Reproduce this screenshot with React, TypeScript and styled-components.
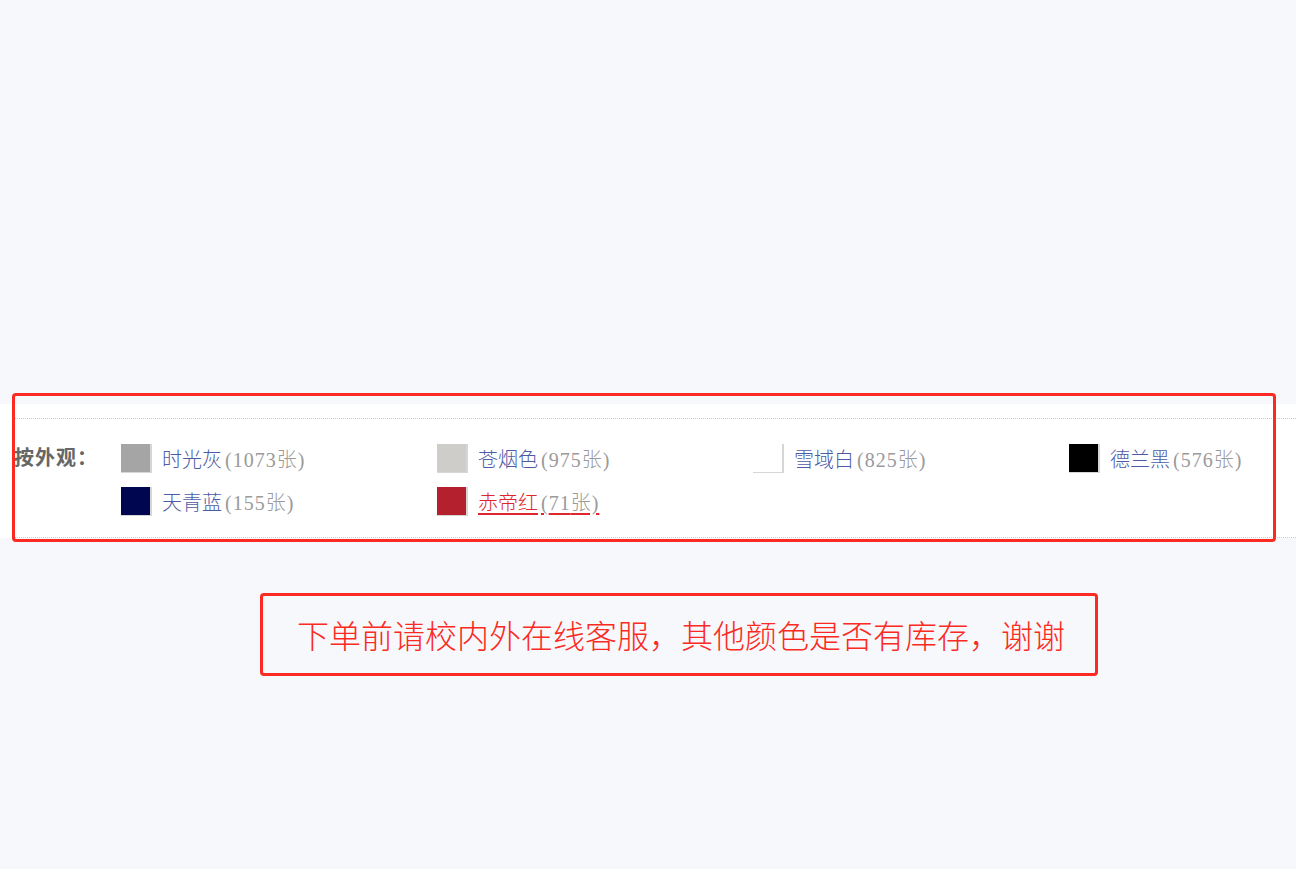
import React from "react";
import styled, { createGlobalStyle } from "styled-components";

const GlobalStyle = createGlobalStyle`
  html, body {
    margin: 0;
    padding: 0;
    background: #f7f8fc;
  }
  body {
    font-family: "Liberation Serif", "Noto Sans CJK SC", serif;
  }
`;

const Page = styled.div`
  width: 1296px;
  min-height: 869px;
  padding-top: 404px;
  box-sizing: border-box;
  overflow: hidden;
`;

const FilterSection = styled.section`
  position: relative;
  background: #ffffff;
  padding-top: 14px;
`;

const FilterRow = styled.div`
  display: flex;
  margin-left: 14px;
  border-top: 1px dotted #c9ccd6;
  border-bottom: 1px dotted #c9ccd6;
  padding: 18px 0 14px;
`;

const Label = styled.div`
  width: 107px;
  flex: none;
  height: 43px;
  line-height: 43px;
  font-size: 20px;
  font-weight: bold;
  color: #666666;
  letter-spacing: 1px;
  font-family: "Liberation Serif", "Noto Sans CJK SC", serif;
`;

const OptionGrid = styled.ul`
  list-style: none;
  margin: 0;
  padding: 0;
  flex: 1;
  display: grid;
  grid-template-columns: repeat(3, 316px) auto;
  grid-auto-rows: 43px;
`;

const Option = styled.li`
  display: flex;
  align-items: center;
`;

const Swatch = styled.span<{ color: string }>`
  width: 29px;
  height: 28px;
  flex: none;
  background: ${({ color }) => color};
  border-right: 2px solid #d6d6d6;
  border-bottom: 1px solid #d6d6d6;
  margin-right: 10px;
  margin-top: -1px;
`;

const OptionLink = styled.a<{ active?: boolean }>`
  font-size: 20px;
  color: ${({ active }) => (active ? "#e0262d" : "#4d5aa6")};
  text-decoration: ${({ active }) => (active ? "underline" : "none")};
  text-decoration-color: #e0262d;
  text-underline-offset: 3px;
  cursor: pointer;
  white-space: nowrap;
  font-family: "Noto Sans CJK SC", sans-serif;
  font-weight: 300;
`;

const Count = styled.span`
  color: #9a9a9a;
  margin-left: 3px;
  font-family: "Liberation Serif", "Noto Sans CJK SC", serif;
  letter-spacing: 1px;
`;

const Highlight = styled.div`
  position: absolute;
  left: 12px;
  top: -11px;
  width: 1264px;
  height: 149px;
  box-sizing: border-box;
  border: 3px solid #fb2a22;
  border-radius: 4px;
  pointer-events: none;
`;

const Note = styled.div`
  margin: 55px 0 0 260px;
  width: 838px;
  height: 83px;
  box-sizing: border-box;
  border: 3px solid #fb2a22;
  border-radius: 4px;
  display: flex;
  align-items: center;
  padding-left: 34px;
  padding-bottom: 2px;
  color: #fb2a22;
  font-size: 32px;
  font-family: "Noto Sans CJK SC", sans-serif;
  font-weight: 300;
`;

const colors = [
  { name: "时光灰", count: 1073, color: "#a5a5a5" },
  { name: "苍烟色", count: 975, color: "#cfcdca" },
  { name: "雪域白", count: 825, color: "#ffffff" },
  { name: "德兰黑", count: 576, color: "#000000" },
  { name: "天青蓝", count: 155, color: "#000650" },
  { name: "赤帝红", count: 71, color: "#b4202d", active: true },
];

export default function App() {
  return (
    <Page>
      <GlobalStyle />
      <FilterSection>
        <FilterRow>
          <Label>按外观：</Label>
          <OptionGrid>
            {colors.map((c) => (
              <Option key={c.name}>
                <Swatch color={c.color} />
                <OptionLink active={c.active}>
                  {c.name}
                  <Count>({c.count}张)</Count>
                </OptionLink>
              </Option>
            ))}
          </OptionGrid>
        </FilterRow>
        <Highlight />
      </FilterSection>
      <Note>下单前请校内外在线客服，其他颜色是否有库存，谢谢</Note>
    </Page>
  );
}
